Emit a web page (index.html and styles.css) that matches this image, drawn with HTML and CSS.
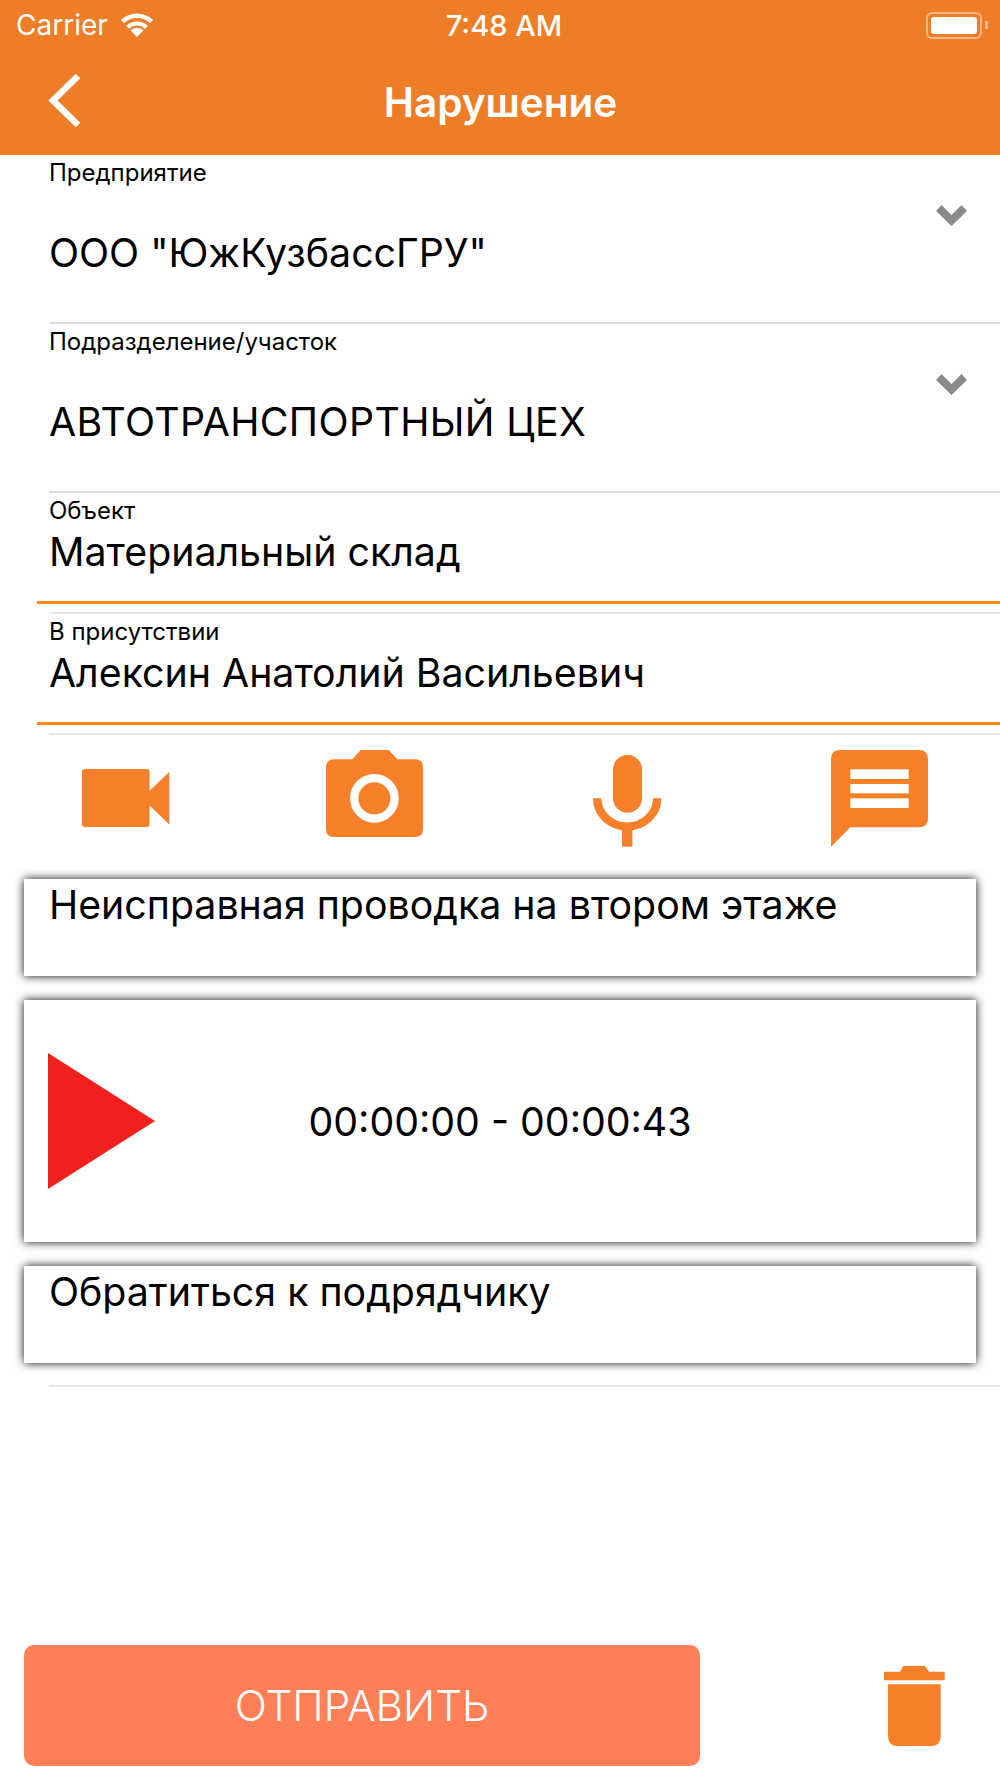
FILE: index.html
```html
<!DOCTYPE html>
<html>
    <head>
        <link rel="stylesheet" href="styles.css">
    </head>
    <body>
        <div class="page">
            <div class="header">
                <div class="status-bar">
                    <div class="status-left">
                        <span>Carrier</span>
                        <svg class="wifi" width="34" height="24" viewBox="0 0 34 24">
                            <path d="M17 24 L10.5 17.2 A9.5 9.5 0 0 1 23.5 17.2 Z" fill="#fff"/>
                            <path d="M7.6 14.2 A14 14 0 0 1 26.4 14.2" fill="none" stroke="#fff" stroke-width="4"/>
                            <path d="M2.4 8.6 A21 21 0 0 1 31.6 8.6" fill="none" stroke="#fff" stroke-width="4.4"/>
                        </svg>
                    </div>
                    <div class="status-time">7:48 AM</div>
                    <div class="battery">
                        <div class="battery-body"><div class="battery-fill"></div></div>
                        <div class="battery-cap"></div>
                    </div>
                </div>
                <div class="nav-bar">
                    <svg class="back" width="34" height="56" viewBox="0 0 34 56">
                        <path d="M30 3 L5 27.5 L30 52" fill="none" stroke="#fff" stroke-width="6.5"/>
                    </svg>
                    <h1>Нарушение</h1>
                </div>
            </div>

            <div class="field field-select">
                <label>Предприятие</label>
                <div class="select-value">ООО "ЮжКузбассГРУ"</div>
                <svg class="chevron" width="32" height="21" viewBox="0 0 32 21">
                    <path d="M0 6 L5.5 0 L15.5 10 L25.5 0 L31 6 L15.5 21 Z" fill="#8a8a8a"/>
                </svg>
            </div>
            <div class="field field-select">
                <label>Подразделение/участок</label>
                <div class="select-value caps">АВТОТРАНСПОРТНЫЙ ЦЕХ</div>
                <svg class="chevron" width="32" height="21" viewBox="0 0 32 21">
                    <path d="M0 6 L5.5 0 L15.5 10 L25.5 0 L31 6 L15.5 21 Z" fill="#8a8a8a"/>
                </svg>
            </div>
            <div class="field field-input">
                <label>Объект</label>
                <div class="input-value">Материальный склад</div>
            </div>
            <div class="divider divider-small"></div>
            <div class="field field-input">
                <label>В присутствии</label>
                <div class="input-value">Алексин Анатолий Васильевич</div>
            </div>
            <div class="divider divider-small"></div>

            <div class="toolbar">
                <svg width="88" height="58" viewBox="0 0 88 58">
                    <path d="M3 0 H64.6 Q67.6 0 67.6 3 V21.7 L87.3 3 V55.4 L67.6 36.4 V55 Q67.6 58 64.6 58 H3 Q0 58 0 55 V3 Q0 0 3 0 Z" fill="#f6802a"/>
                </svg>
                <svg width="97" height="87" viewBox="0 0 97 87">
                    <path d="M8 9.3 H26.4 L34.7 0 H62.7 L71.4 9.3 H89 Q97 9.3 97 17.3 V79 Q97 87 89 87 H8 Q0 87 0 79 V17.3 Q0 9.3 8 9.3 Z" fill="#f6802a"/>
                    <circle cx="48.4" cy="48.3" r="20.2" fill="none" stroke="#fff" stroke-width="8.3"/>
                </svg>
                <svg width="69" height="92" viewBox="0 0 69 92">
                    <rect x="20" y="0" width="29" height="57.7" rx="14.5" fill="#f6802a"/>
                    <path d="M4.15 43.3 A30 28.2 0 0 0 64.25 43.3" fill="none" stroke="#f6802a" stroke-width="8.3"/>
                    <rect x="29" y="70" width="10.4" height="21.7" fill="#f6802a"/>
                </svg>
                <svg width="97" height="97" viewBox="0 0 97 97">
                    <path d="M9 0 H88 Q97 0 97 9 V68.3 Q97 77.3 88 77.3 H19.3 L0 96.7 V9 Q0 0 9 0 Z" fill="#f6802a"/>
                    <rect x="19.3" y="19.3" width="58.4" height="9.7" fill="#fff"/>
                    <rect x="19.3" y="34" width="58.4" height="9.3" fill="#fff"/>
                    <rect x="19.3" y="48.3" width="58.4" height="9.7" fill="#fff"/>
                </svg>
            </div>

            <div class="card card-text">Неисправная проводка на втором этаже</div>
            <div class="card card-audio">
                <svg class="play" width="108" height="136" viewBox="0 0 108 136">
                    <path d="M0 0 L107 68 L0 136 Z" fill="#f1201f"/>
                </svg>
                <div class="audio-time">00:00:00 - 00:00:43</div>
            </div>
            <div class="card card-text">Обратиться к подрядчику</div>
            <div class="divider divider-last"></div>

            <div class="footer">
                <button class="send-btn">ОТПРАВИТЬ</button>
                <svg width="61" height="80" viewBox="0 0 61 80">
                    <path d="M0 5.7 H16 L19.3 0 H41 L45 5.7 H60.7 V14.3 H0 Z" fill="#f6802a"/>
                    <path d="M4 18.3 H56.7 V70 Q56.7 80 46.7 80 H14 Q4 80 4 70 Z" fill="#f6802a"/>
                </svg>
            </div>
        </div>
    </body>
</html>
```

FILE: styles.css
```css
body {
    font-family: Inter, "Liberation Sans", sans-serif;
    background-color: white;
    color: black;
    margin: 0;
}

.page {
    height: 1778px;
    display: flex;
    flex-direction: column;
    overflow: hidden;
}

.header {
    height: 155px;
    background-color: #ee7d28;
    color: white;
}

.status-bar {
    height: 50px;
    padding: 0 12px 0 16px;
    display: flex;
    align-items: center;
    justify-content: space-between;
    font-size: 28px;
}

.status-left {
    width: 190px;
    display: flex;
    align-items: center;
    gap: 12px;
}

.status-time {
    margin-left: 4px;
    font-size: 29px;
    font-weight: 500;
}

.battery {
    width: 190px;
    display: flex;
    align-items: center;
    justify-content: flex-end;
}

.battery-body {
    width: 46px;
    height: 17px;
    padding: 3px;
    border: 2px solid #f8b787;
    border-radius: 6px;
}

.battery-fill {
    height: 100%;
    background-color: white;
    border-radius: 3px;
}

.battery-cap {
    width: 3px;
    height: 8px;
    margin-left: 3px;
    background-color: #f8b787;
}

.nav-bar {
    height: 105px;
    position: relative;
    display: flex;
    align-items: center;
    justify-content: center;
}

.back {
    position: absolute;
    left: 48px;
    top: 23px;
}

h1 {
    margin: 0 0 0 1px;
    font-size: 40.5px;
    font-weight: 600;
}

.field {
    position: relative;
}

label {
    display: block;
    font-size: 24px;
    line-height: 24px;
}

.select-value, .input-value, .card {
    font-size: 39.3px;
}

.caps {
    letter-spacing: 0.4px;
}

.field-select {
    height: 169px;
    margin-left: 49px;
    padding-top: 6px;
    box-sizing: border-box;
    border-bottom: 2px solid #ddd;
}

.field-select .select-value {
    margin-top: 45px;
    line-height: 46px;
}

.chevron {
    position: absolute;
    right: 32px;
    top: 50px;
}

.field-input {
    height: 111px;
    margin-left: 37px;
    padding: 6px 0 0 12px;
    box-sizing: border-box;
    border-bottom: 3px solid #ff8a12;
}

.input-value {
    line-height: 58px;
}

.divider {
    margin-left: 49px;
    border-top: 2px solid #e6e6e6;
}

.divider-small {
    margin-top: 8px;
}

.toolbar {
    height: 97px;
    margin: 15px 0 32px 0;
    display: grid;
    grid-template-columns: 251px 246px 261px 242px;
    justify-items: center;
    align-items: start;
}

.toolbar svg:first-child {
    margin-top: 19px;
}

.toolbar svg:nth-child(3) {
    margin-top: 5px;
}

.card {
    margin: 0 24px;
    background-color: white;
    box-shadow: 0 0 9px rgba(0, 0, 0, 0.95);
}

.card-text {
    height: 97px;
    padding-left: 25px;
    line-height: 52px;
    box-sizing: border-box;
}

.card-audio {
    height: 242px;
    margin-top: 24px;
    margin-bottom: 24px;
    position: relative;
    display: flex;
    align-items: center;
    justify-content: center;
}

.play {
    position: absolute;
    left: 24px;
    top: 53px;
}

.divider-last {
    margin-top: 22px;
}

.footer {
    margin-top: auto;
    padding: 0 55px 12px 24px;
    display: flex;
    align-items: center;
    justify-content: space-between;
}

.send-btn {
    width: 676px;
    height: 121px;
    background-color: #ff7f57;
    color: white;
    border: none;
    border-radius: 10px;
    font-size: 42.3px;
    font-weight: 300;
    font-family: Inter, sans-serif;
}
```
